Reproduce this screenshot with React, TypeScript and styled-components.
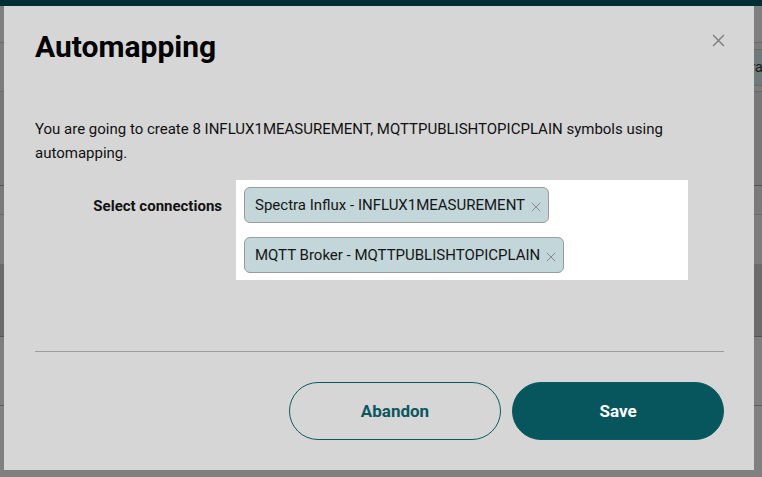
import React from "react";
import styled, { createGlobalStyle } from "styled-components";

const Global = createGlobalStyle`
  html, body { margin: 0; padding: 0; }
  body { background: #808080; font-family: Roboto, "Liberation Sans", sans-serif; }
  * { box-sizing: border-box; }
`;

const Screen = styled.div`
  position: relative;
  width: 762px;
  height: 477px;
  overflow: hidden;
  background: #808080;
  display: flex;
  flex-direction: column;
`;

const TopBar = styled.div`
  height: 6px;
  background: #012f35;
  flex: none;
`;

const BgRow = styled.div<{ $h: number; $bg?: string; $line?: string }>`
  height: ${(p) => p.$h}px;
  flex: none;
  background: ${(p) => p.$bg || "#7e7e7e"};
  border-bottom: 1px solid ${(p) => p.$line || "#6a6a6a"};
  display: flex;
  align-items: center;
  justify-content: flex-end;
`;

const BgButton = styled.div`
  height: 37px;
  width: 100px;
  margin-right: -1px;
  background: #6e7a7a;
  border-top: 1px solid #6a6a6a;
  border-bottom: 1px solid #6a6a6a;
  color: #1a1a1a;
  font-size: 15px;
  line-height: 35px;
  text-align: right;
  white-space: nowrap;
`;

const Overlay = styled.div`
  position: absolute;
  left: 4px;
  top: 6px;
  width: 750px;
`;

const Modal = styled.div`
  background: #d6d6d6;
  padding: 21px 30px 30px 31px;
  display: flex;
  flex-direction: column;
`;

const Header = styled.div`
  display: flex;
  justify-content: space-between;
  align-items: flex-start;
  height: 90px;
`;

const Title = styled.h1`
  margin: 0;
  font-family: Roboto, "Liberation Sans", sans-serif;
  font-weight: 700;
  font-size: 30px;
  line-height: 40px;
  color: #000;
`;

const CloseButton = styled.button`
  border: none;
  background: none;
  padding: 0;
  margin: 7px -1px 0 0;
  width: 13px;
  height: 13px;
  display: flex;
  cursor: pointer;
`;

const Intro = styled.p`
  margin: 0;
  font-size: 15px;
  line-height: 24px;
  color: #111;
`;

const FormRow = styled.div`
  margin-top: 15px;
  display: grid;
  grid-template-columns: 187px 452px;
  column-gap: 14px;
  align-items: start;
`;

const Label = styled.label`
  text-align: right;
  font-weight: 700;
  font-size: 15px;
  line-height: 24px;
  color: #111;
  padding-top: 14px;
`;

const ChipBox = styled.div`
  background: #ffffff;
  padding: 7px 8px 7px;
  display: flex;
  flex-direction: column;
  align-items: flex-start;
  gap: 14px;
`;

const Chip = styled.div`
  height: 36px;
  display: flex;
  align-items: center;
  gap: 6px;
  padding: 0 7px 0 10px;
  background: #c3d6d9;
  border: 1px solid #9b9b9b;
  border-radius: 6px;
  font-size: 15px;
  line-height: 24px;
  color: #151515;
  white-space: nowrap;
`;

const ChipRemove = styled.span`
  display: flex;
  width: 10px;
  height: 10px;
  margin-top: 3px;
`;

const Divider = styled.hr`
  margin: 71px 0 0;
  border: none;
  border-top: 1px solid #9c9c9c;
  height: 0;
`;

const Footer = styled.div`
  margin-top: 30px;
  display: flex;
  justify-content: flex-end;
  gap: 11px;
`;

const Button = styled.button<{ $primary?: boolean }>`
  width: 212px;
  height: 58px;
  border-radius: 29px;
  font-family: Roboto, "Liberation Sans", sans-serif;
  font-weight: 700;
  font-size: 17px;
  cursor: pointer;
  border: 1px solid #0b5a61;
  background: ${(p) => (p.$primary ? "#08565d" : "transparent")};
  color: ${(p) => (p.$primary ? "#ffffff" : "#0b5660")};
`;

const XIcon = ({ size, color, w }: { size: number; color: string; w: number }) => (
  <svg width={size} height={size} viewBox="0 0 12 12" fill="none">
    <path d="M1 1 L11 11 M11 1 L1 11" stroke={color} strokeWidth={w} strokeLinecap="butt" />
  </svg>
);

const connections = [
  "Spectra Influx - INFLUX1MEASUREMENT",
  "MQTT Broker - MQTTPUBLISHTOPICPLAIN",
];

export default function App() {
  return (
    <>
      <Global />
      <Screen>
        <TopBar />
        <BgRow $h={37} $bg="#7f7f7f" />
        <BgRow $h={49} $bg="#7c7c7c">
          <BgButton>Genera</BgButton>
        </BgRow>
        <BgRow $h={94} $bg="#777777" $line="#555555" />
        <BgRow $h={29} $bg="#7a7a7a" />
        <BgRow $h={50} $bg="#7c7c7c" />
        <BgRow $h={72} $bg="#6b6b6b" $line="#555555" />
        <BgRow $h={69} $bg="#7f7f7f" $line="#5e5e5e" />
        <BgRow $h={70} $bg="#808080" $line="#808080" />
        <Overlay>
          <Modal role="dialog">
            <Header>
              <Title>Automapping</Title>
              <CloseButton aria-label="Close">
                <XIcon size={13} color="#7d7d7d" w={1.3} />
              </CloseButton>
            </Header>
            <Intro>
              You are going to create 8 INFLUX1MEASUREMENT, MQTTPUBLISHTOPICPLAIN symbols using
              automapping.
            </Intro>
            <FormRow>
              <Label>Select connections</Label>
              <ChipBox>
                {connections.map((c) => (
                  <Chip key={c}>
                    {c}
                    <ChipRemove>
                      <XIcon size={10} color="#8a8a8a" w={1.2} />
                    </ChipRemove>
                  </Chip>
                ))}
              </ChipBox>
            </FormRow>
            <Divider />
            <Footer>
              <Button>Abandon</Button>
              <Button $primary>Save</Button>
            </Footer>
          </Modal>
        </Overlay>
      </Screen>
    </>
  );
}
